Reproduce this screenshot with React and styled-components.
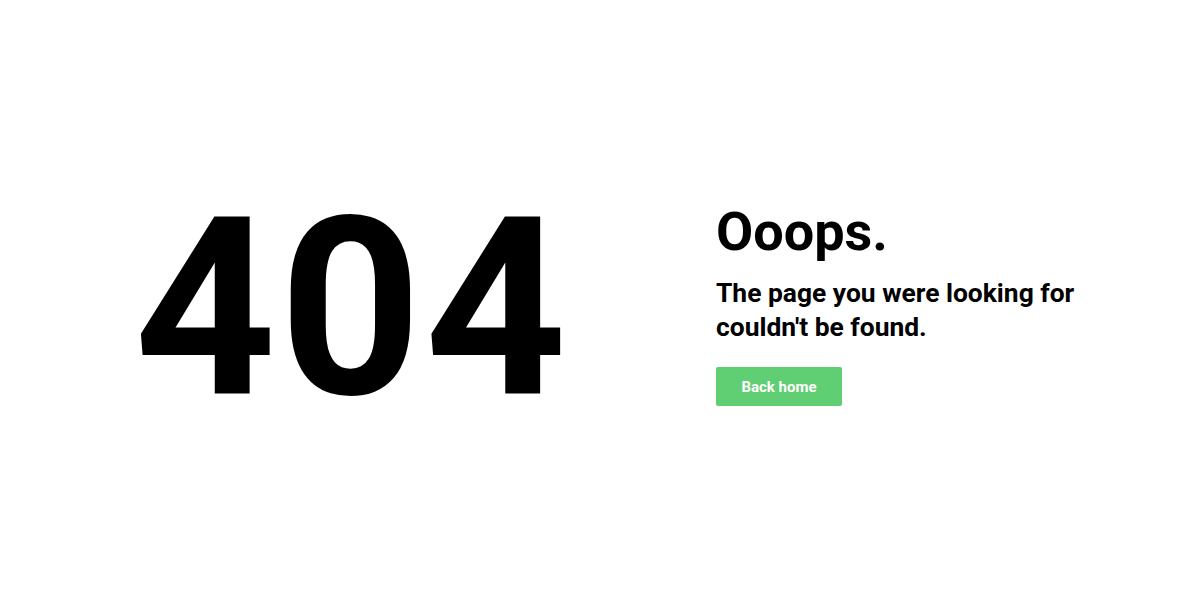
import styled, { createGlobalStyle } from "styled-components"

const GlobalStyle = createGlobalStyle`
  body {
    margin: 0;
    background: #fff;
    font-family: Roboto, "Liberation Sans", sans-serif;
    color: #000;
  }
`

const Page = styled.div`
  height: 600px;
  display: flex;
  align-items: center;
  padding-left: 134px;
`

const BigCode = styled.div`
  width: 582px;
  font-size: 248px;
  font-weight: 700;
  letter-spacing: 3px;
  line-height: 1;
  padding-top: 20px;
`

const Info = styled.div`
  display: flex;
  flex-direction: column;
  align-items: flex-start;
  padding-top: 10px;
`

const Title = styled.h1`
  margin: 0;
  font-size: 54px;
  font-weight: 700;
  line-height: 56px;
`

const Message = styled.p`
  margin: 16px 0 0;
  font-size: 26.4px;
  font-weight: 700;
  line-height: 34px;
`

const HomeButton = styled.a`
  margin-top: 23px;
  display: inline-flex;
  align-items: center;
  justify-content: center;
  width: 126px;
  height: 39px;
  background: #60ce72;
  border-radius: 2px;
  color: #fff;
  font-size: 15px;
  font-weight: 700;
  text-decoration: none;
`

export default function App() {
  return (
    <>
      <GlobalStyle />
      <Page>
        <BigCode>404</BigCode>
        <Info>
          <Title>Ooops.</Title>
          <Message>
            The page you were looking for
            <br />
            couldn't be found.
          </Message>
          <HomeButton href="#">Back home</HomeButton>
        </Info>
      </Page>
    </>
  )
}
